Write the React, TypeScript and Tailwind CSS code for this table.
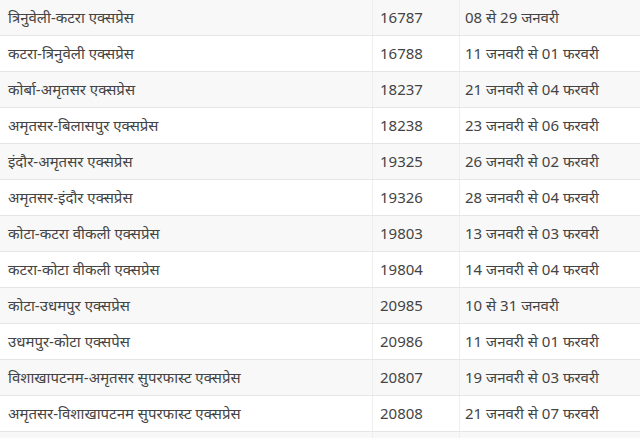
const rows: [string, string, string][] = [
  ["त्रिनुवेली-कटरा एक्सप्रेस", "16787", "08 से 29 जनवरी"],
  ["कटरा-त्रिनुवेली एक्सप्रेस", "16788", "11 जनवरी से 01 फरवरी"],
  ["कोर्बा-अमृतसर एक्सप्रेस", "18237", "21 जनवरी से 04 फरवरी"],
  ["अमृतसर-बिलासपुर एक्सप्रेस", "18238", "23 जनवरी से 06 फरवरी"],
  ["इंदौर-अमृतसर एक्सप्रेस", "19325", "26 जनवरी से 02 फरवरी"],
  ["अमृतसर-इंदौर एक्सप्रेस", "19326", "28 जनवरी से 04 फरवरी"],
  ["कोटा-कटरा वीकली एक्सप्रेस", "19803", "13 जनवरी से 03 फरवरी"],
  ["कटरा-कोटा वीकली एक्सप्रेस", "19804", "14 जनवरी से 04 फरवरी"],
  ["कोटा-उधमपुर एक्सप्रेस", "20985", "10 से 31 जनवरी"],
  ["उधमपुर-कोटा एक्सपेस", "20986", "11 जनवरी से 01 फरवरी"],
  ["विशाखापटनम-अमृतसर सुपरफास्ट एक्सप्रेस", "20807", "19 जनवरी से 03 फरवरी"],
  ["अमृतसर-विशाखापटनम सुपरफास्ट एक्सप्रेस", "20808", "21 जनवरी से 07 फरवरी"],
  ["", "", ""],
];

export default function App() {
  return (
    <div className="h-[438px] w-[640px] overflow-hidden bg-white font-['Noto_Sans','Noto_Sans_Devanagari','Lohit_Devanagari',sans-serif] text-[15px] text-[#444]">
      {rows.map(([name, num, dates], i) => (
        <div
          key={i}
          className={`grid h-[36px] grid-cols-[372px_87px_1fr] border-b border-[#e6e6e6] ${
            i % 2 === 0 ? "bg-[#f8f8f8]" : "bg-white"
          }`}
        >
          <div className="flex items-center pl-[8px] whitespace-nowrap">{name}</div>
          <div className="flex items-center border-l border-[#eeeeee] pl-[7px]">{num}</div>
          <div className="flex items-center border-l border-[#eeeeee] pl-[5px] whitespace-nowrap">{dates}</div>
        </div>
      ))}
    </div>
  );
}
